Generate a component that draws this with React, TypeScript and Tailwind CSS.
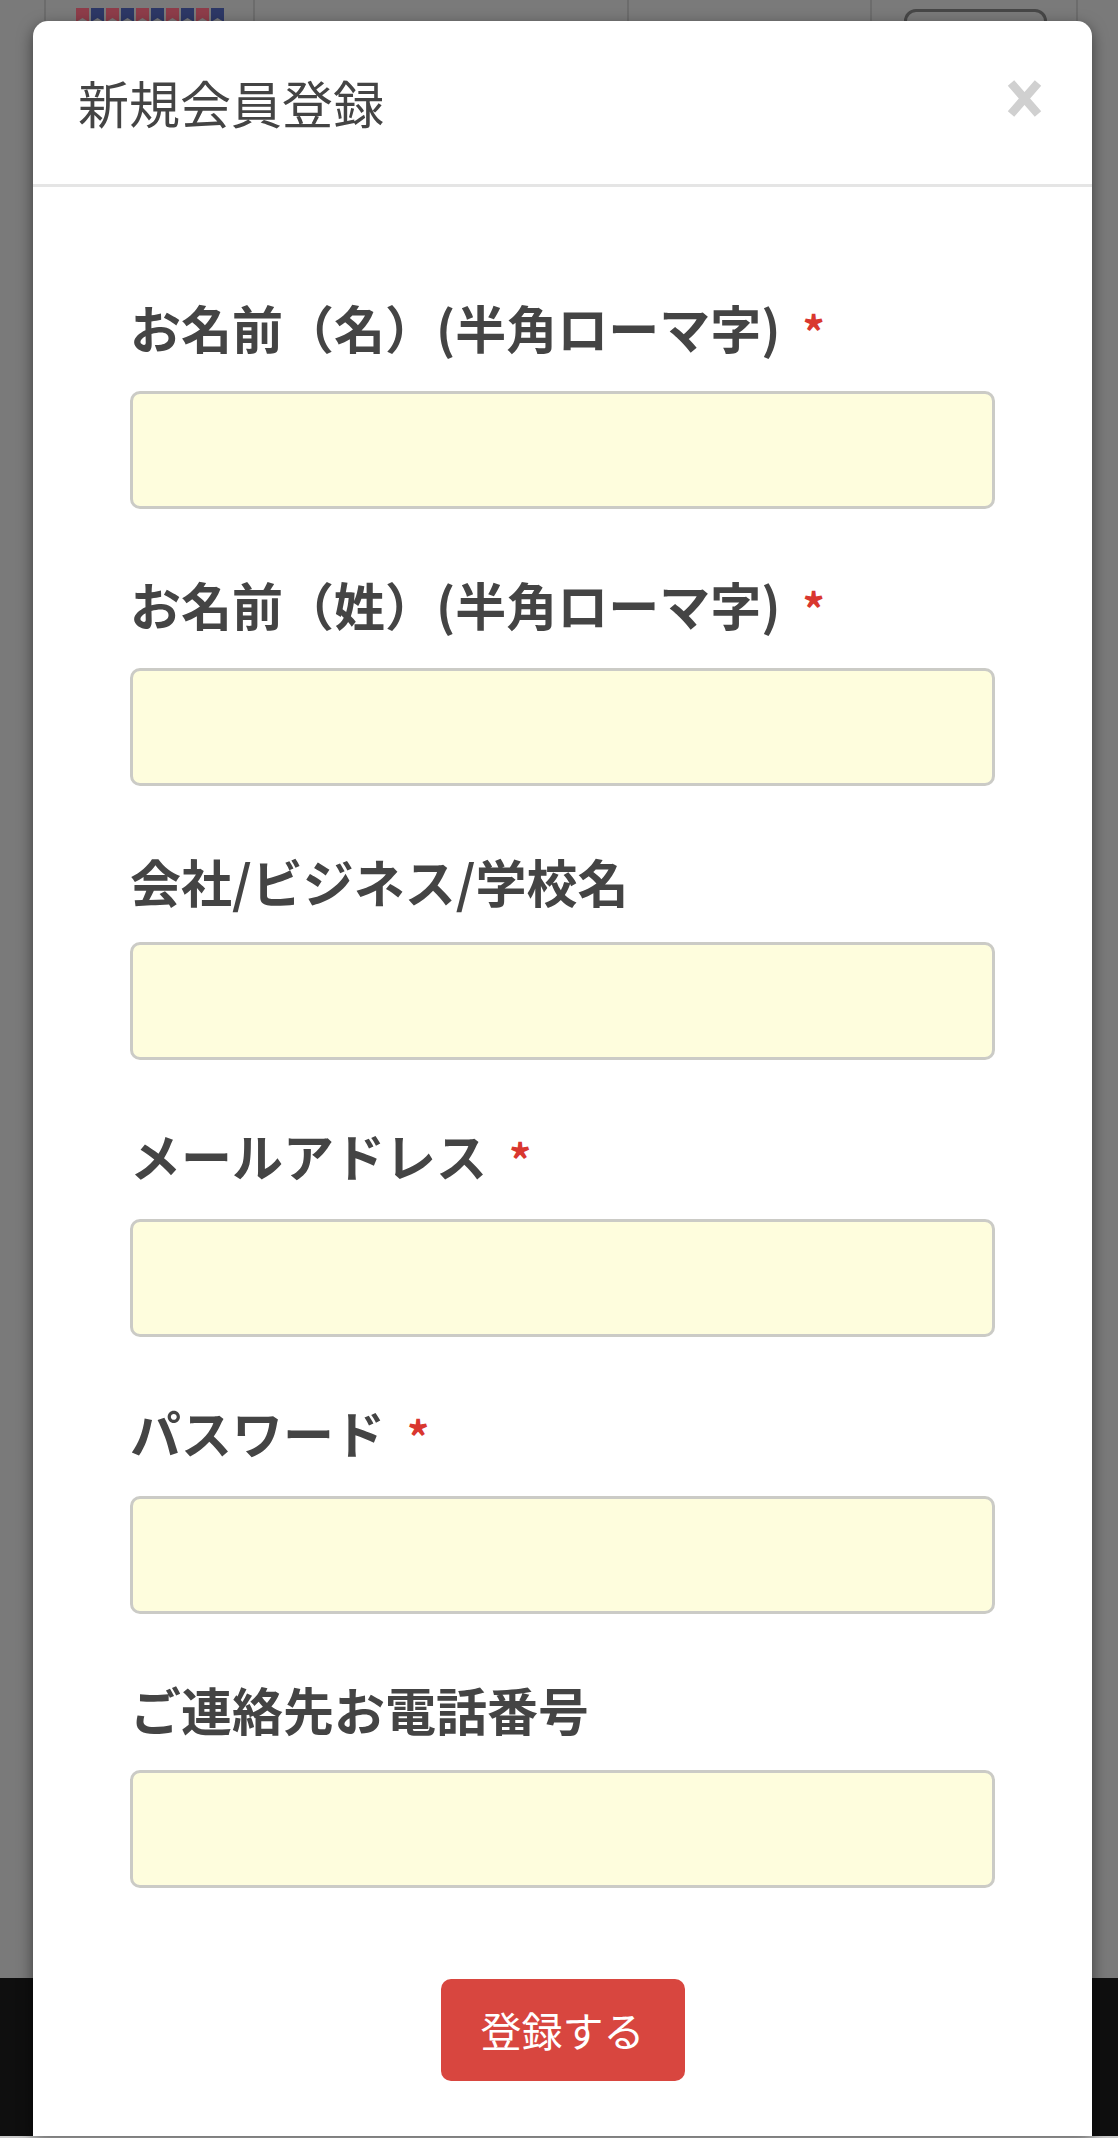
import React from 'react';

const fields = [
    { label: 'お名前（名）(半角ローマ字)', required: true, type: 'text' },
    { label: 'お名前（姓）(半角ローマ字)', required: true, type: 'text' },
    { label: '会社/ビジネス/学校名', required: false, type: 'text' },
    { label: 'メールアドレス', required: true, type: 'email' },
    { label: 'パスワード', required: true, type: 'password' },
    { label: 'ご連絡先お電話番号', required: false, type: 'tel' },
];

function Flags() {
    return (
        <svg width="150" height="14" viewBox="0 0 150 14">
            {Array.from({ length: 10 }).map((_, i) => (
                <path
                    key={i}
                    d={`M${i * 15} 0 h13 v14 l-6.5 -4 l-6.5 4 z`}
                    fill={i % 2 === 0 ? '#8e3d4a' : '#2d3866'}
                />
            ))}
        </svg>
    );
}

export default function App() {
    return (
        <div
            className="relative w-[1118px] h-[2138px] overflow-hidden"
            style={{ fontFamily: '"Noto Sans CJK JP", "Noto Sans", sans-serif' }}
        >
            {/* Dimmed page behind the modal */}
            <div className="flex flex-col h-full">
                <div className="h-[1978px] bg-[#7a7a7a] flex items-start">
                    <div className="flex h-[40px] w-full">
                        <div className="w-[46px] border-r-[2px] border-[#6c6c6c]" />
                        <div className="w-[209px] border-r-[2px] border-[#6c6c6c] pl-[30px] pt-[8px]">
                            <Flags />
                        </div>
                        <div className="w-[374px] border-r-[2px] border-[#6c6c6c]" />
                        <div className="w-[243px] border-r-[2px] border-[#6c6c6c]" />
                        <div className="w-[206px] border-r-[2px] border-[#6c6c6c] pl-[32px] pt-[9px]">
                            <div className="w-[143px] h-[40px] rounded-[12px] border-[3px] border-[#474747]" />
                        </div>
                        <div className="flex-1" />
                    </div>
                </div>
                <div className="flex-1 bg-[#0f0f0f]" />
                <div className="h-[2px] bg-[#c9c9c9]" />
            </div>

            {/* Modal */}
            <div className="absolute left-[33px] top-[21px] bottom-[2px] w-[1059px] bg-white rounded-t-[15px] shadow-[0_5px_15px_rgba(0,0,0,0.5)] flex flex-col">
                <div className="h-[166px] border-b-[3px] border-[#e5e5e5] flex items-center justify-between pl-[45px] pr-[50px]">
                    <h2 className="text-[51px] font-normal text-[#444] leading-none">新規会員登録</h2>
                    <button className="w-[36px] h-[40px] mb-[8px] flex items-center justify-center">
                        <svg width="35" height="39" viewBox="0 0 35 39">
                            <path d="M4 4 L31 35 M31 4 L4 35" stroke="#d0d0d0" strokeWidth="8.5" />
                        </svg>
                    </button>
                </div>

                <div className="flex flex-col px-[97px] pt-[105px]">
                    {fields.map((f, i) => (
                        <div key={i} className="flex flex-col mb-[60px]">
                            <label className="text-[51px] font-bold text-[#444] leading-[70px] mb-[26px] whitespace-nowrap">
                                {f.label}
                                {f.required && (
                                    <span className="text-[#d9372f] text-[44px] ml-[22px]">*</span>
                                )}
                            </label>
                            <input
                                type={f.type}
                                className="h-[118px] w-full rounded-[10px] border-[3px] border-[#cbcbc6] bg-[#fefddd] outline-none"
                            />
                        </div>
                    ))}
                    <div className="flex justify-center mt-[31px]">
                        <button className="w-[244px] h-[102px] rounded-[10px] bg-[#d8463f] text-white text-[41px] font-normal">
                            登録する
                        </button>
                    </div>
                </div>
            </div>
        </div>
    );
}
